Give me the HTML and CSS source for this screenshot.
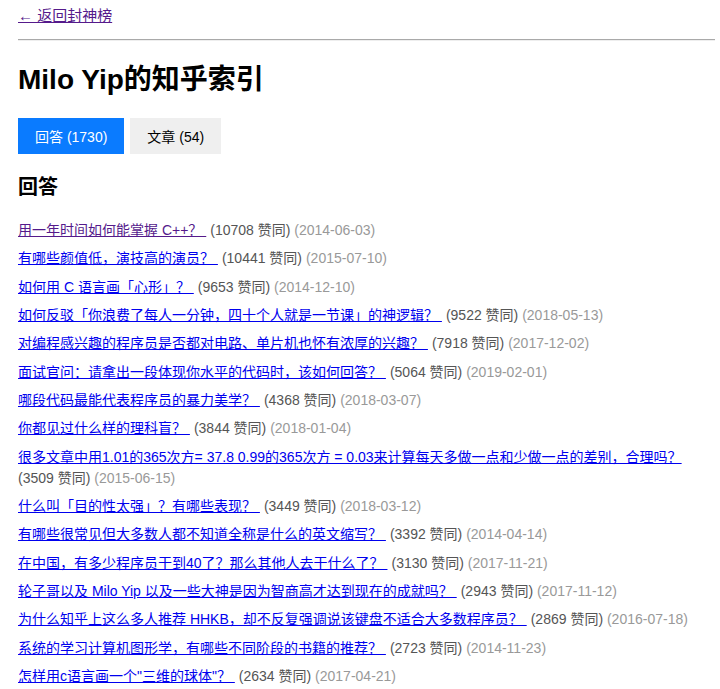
FILE: index.html
```html
<!DOCTYPE html>
<html lang="zh-CN">
<head>
<meta charset="utf-8">
<title>Milo Yip的知乎索引</title>
<link rel="stylesheet" href="styles.css">
</head>
<body>
<div class="page">
  <a class="back visited" href="#">← 返回封神榜</a>
  <hr class="rule">
  <h1 class="title">Milo Yip的知乎索引</h1>
  <div class="tabs">
    <button class="tab active">回答 (1730)</button>
    <button class="tab">文章 (54)</button>
  </div>
  <h2 class="section">回答</h2>
  <ul class="list">
    <li><a class="visited" href="#">用一年时间如何能掌握 C++？ </a> <span class="votes">(10708 赞同)</span> <span class="date">(2014-06-03)</span></li>
    <li><a href="#">有哪些颜值低，演技高的演员？ </a> <span class="votes">(10441 赞同)</span> <span class="date">(2015-07-10)</span></li>
    <li><a href="#">如何用 C 语言画「心形」？ </a> <span class="votes">(9653 赞同)</span> <span class="date">(2014-12-10)</span></li>
    <li><a href="#">如何反驳「你浪费了每人一分钟，四十个人就是一节课」的神逻辑？ </a> <span class="votes">(9522 赞同)</span> <span class="date">(2018-05-13)</span></li>
    <li><a href="#">对编程感兴趣的程序员是否都对电路、单片机也怀有浓厚的兴趣？ </a> <span class="votes">(7918 赞同)</span> <span class="date">(2017-12-02)</span></li>
    <li><a href="#">面试官问：请拿出一段体现你水平的代码时，该如何回答？ </a> <span class="votes">(5064 赞同)</span> <span class="date">(2019-02-01)</span></li>
    <li><a href="#">哪段代码最能代表程序员的暴力美学？ </a> <span class="votes">(4368 赞同)</span> <span class="date">(2018-03-07)</span></li>
    <li><a href="#">你都见过什么样的理科盲？ </a> <span class="votes">(3844 赞同)</span> <span class="date">(2018-01-04)</span></li>
    <li><a href="#">很多文章中用1.01的365次方= 37.8 0.99的365次方 = 0.03来计算每天多做一点和少做一点的差别，合理吗？ </a> <span class="votes">(3509 赞同)</span> <span class="date">(2015-06-15)</span></li>
    <li><a href="#">什么叫「目的性太强」？有哪些表现？ </a> <span class="votes">(3449 赞同)</span> <span class="date">(2018-03-12)</span></li>
    <li><a href="#">有哪些很常见但大多数人都不知道全称是什么的英文缩写？ </a> <span class="votes">(3392 赞同)</span> <span class="date">(2014-04-14)</span></li>
    <li><a href="#">在中国，有多少程序员干到40了？那么其他人去干什么了？ </a> <span class="votes">(3130 赞同)</span> <span class="date">(2017-11-21)</span></li>
    <li><a href="#">轮子哥以及 Milo Yip 以及一些大神是因为智商高才达到现在的成就吗？ </a> <span class="votes">(2943 赞同)</span> <span class="date">(2017-11-12)</span></li>
    <li><a href="#">为什么知乎上这么多人推荐 HHKB，却不反复强调说该键盘不适合大多数程序员？ </a> <span class="votes">(2869 赞同)</span> <span class="date">(2016-07-18)</span></li>
    <li><a href="#">系统的学习计算机图形学，有哪些不同阶段的书籍的推荐？ </a> <span class="votes">(2723 赞同)</span> <span class="date">(2014-11-23)</span></li>
    <li><a href="#">怎样用c语言画一个"三维的球体"？ </a> <span class="votes">(2634 赞同)</span> <span class="date">(2017-04-21)</span></li>
  </ul>
</div>
</body>
</html>
```

FILE: styles.css
```css
html, body {
  margin: 0;
  padding: 0;
  background: #fff;
}
body {
  font-family: "Liberation Sans", "Noto Sans CJK SC", sans-serif;
  font-size: 14px;
  line-height: 21px;
  color: #000;
}
.page {
  padding: 5px 5px 0 18px;
}
a {
  color: #0000ee;
  text-decoration: underline;
}
a.visited {
  color: #551a8b;
}
.back {
  display: inline-block;
  font-size: 15px;
}
.rule {
  margin: 12px 0 0 0;
  border: 0;
  border-top: 1px solid #a9a9a9;
  border-bottom: 1px solid #eeeeee;
  height: 0;
}
.title {
  margin: 21px 0 0 0;
  font-size: 28px;
  line-height: 36px;
  font-weight: bold;
}
.tabs {
  display: flex;
  gap: 6px;
  margin-top: 20px;
}
.tab {
  height: 36px;
  padding: 0 17px;
  border: 0;
  font-family: inherit;
  font-size: 14px;
  background: #efefef;
  color: #000;
}
.tab.active {
  background: #0a7bff;
  color: #fff;
}
.section {
  margin: 19px 0 0 0;
  font-size: 20px;
  line-height: 28px;
  font-weight: bold;
}
.list {
  list-style: none;
  margin: 19px 0 0 0;
  padding: 0;
}
.list li {
  margin-bottom: 7.35px;
}
.list a {
  margin-right: 4px;
}
.votes {
  color: #555;
}
.date {
  color: #999;
}
```
